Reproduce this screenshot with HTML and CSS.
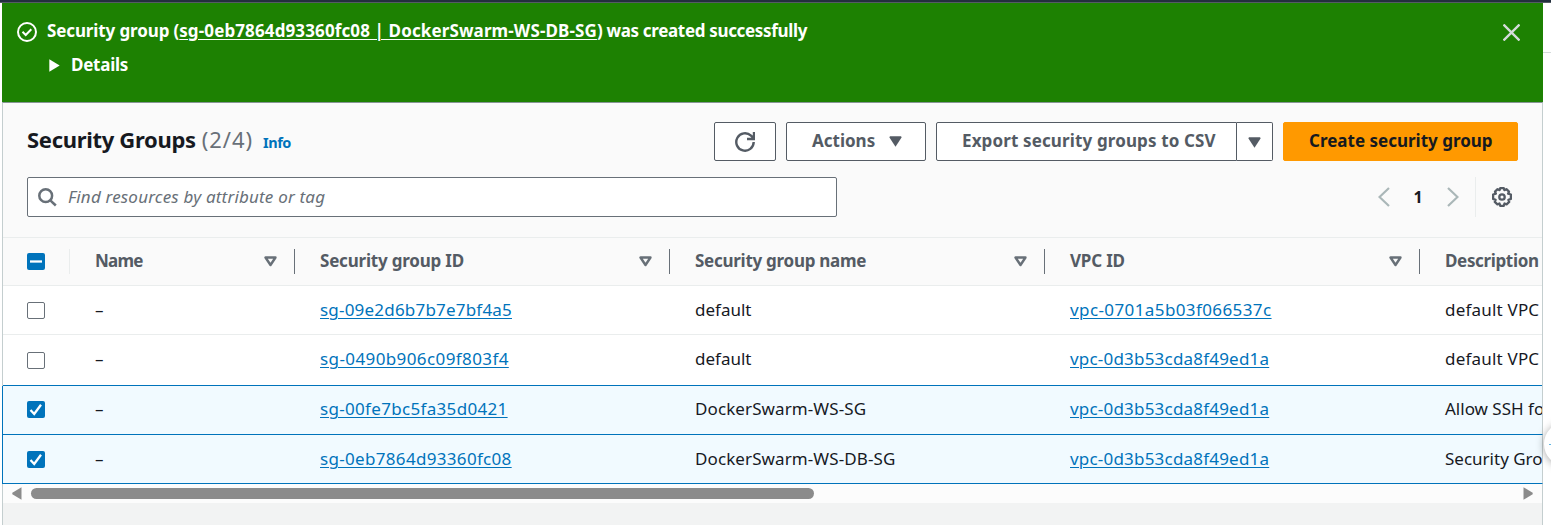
FILE: index.html
```html
<!DOCTYPE html>
<html lang="en">
<head>
<meta charset="utf-8">
<title>Security Groups</title>
<link rel="stylesheet" href="styles.css">
</head>
<body>
<div class="topbar"></div>
<div class="page">
  <main class="content">
    <section class="flash">
      <svg class="flash-icon" viewBox="0 0 20 20"><circle cx="10" cy="10" r="9"/><path d="M5.500 9.800l3.200 3.200 5.600-5.800"/></svg>
      <div class="flash-body">
        <div class="flash-text">Security group (<a class="flash-link">sg-0eb7864d93360fc08 | DockerSwarm-WS-DB-SG</a><span class="flash-end">) was created successfully</span></div>
        <div class="details"><svg class="details-arrow" viewBox="0 0 11 13"><path d="M.3.300v12.400L10.700 6.500z"/></svg><span class="details-text">Details</span></div>
      </div>
      <svg class="close" viewBox="0 0 16 16"><path d="M0.500 0.500l15 15M15.500 0.500l-15 15"/></svg>
    </section>
    <section class="panel">
      <header class="head">
        <h1 class="title">Security Groups</h1><span class="count">(2/4)</span><a class="info">Info</a>
        <div class="buttons">
          <button class="btn refresh"><svg width="20" height="20" viewBox="0 0 20 20"><path d="M18.700 10a8.700 8.700 0 1 1-2.700-6.300L18.500 6M19 0v7h-7"/></svg></button>
          <button class="btn actions"><span class="t-actions">Actions</span><svg width="13" height="11" viewBox="0 0 13 11"><path class="solid" d="M1 .3h11l.7 1L6.500 10.800.3 1.300z"/></svg></button>
          <div class="split"><button class="btn export"><span class="t-export">Export security groups to CSV</span></button><button class="btn drop"><svg width="13" height="11" viewBox="0 0 13 11"><path class="solid" d="M1 .3h11l.7 1L6.500 10.800.3 1.300z"/></svg></button></div>
          <button class="btn primary"><span class="t-create">Create security group</span></button>
        </div>
      </header>
      <div class="tools">
        <div class="search"><svg width="19" height="19" viewBox="0 0 19 19"><circle cx="7.700" cy="7.700" r="6.400"/><path d="M12.300 12.300l5.500 5.200"/></svg><span class="placeholder">Find resources by attribute or tag</span></div>
        <div class="pager">
          <svg class="chev" width="12" height="20" viewBox="0 0 12 20"><path d="M11 1L1.500 10l9.500 9"/></svg>
          <span class="num">1</span>
          <svg class="chev" width="12" height="20" viewBox="0 0 12 20"><path d="M1 1l9.500 9L1 19"/></svg>
          <div class="gearbox"><svg class="gear" width="20" height="20" viewBox="0 0 20 20"><path d="M8.300 1.100h3.400l.7 2 2-.9 2.600 2.500-.9 2 2.800.8v4.400l-2.500.9.8 2.100-2.600 2.500-2.100-.9-.8 2.400H8.300l-.8-2.400-2.100.9-2.600-2.500.8-2.100-2.500-.9V7.500l2.800-.8-.9-2L5.600 2.200l2 .9z"/><circle cx="10" cy="10" r="2.700"/></svg></div>
        </div>
      </div>
      <div class="table">
        <div class="row thead">
          <div class="cell pick"><span class="box on"><svg viewBox="0 0 18 17"><path d="M3 8.500h12"/></svg></span></div>
          <div class="cell"><span class="h-name">Name</span><svg class="sort" viewBox="0 0 13 11"><path d="M1.500 1.500h10L6.500 9z"/></svg></div>
          <div class="cell"><span class="h-id">Security group ID</span><svg class="sort" viewBox="0 0 13 11"><path d="M1.500 1.500h10L6.500 9z"/></svg></div>
          <div class="cell"><span class="h-group">Security group name</span><svg class="sort" viewBox="0 0 13 11"><path d="M1.500 1.500h10L6.500 9z"/></svg></div>
          <div class="cell"><span class="h-vpc">VPC ID</span><svg class="sort" viewBox="0 0 13 11"><path d="M1.500 1.500h10L6.500 9z"/></svg></div>
          <div class="cell"><span class="h-desc">Description</span></div>
        </div>
        <div class="row">
          <div class="cell pick"><span class="box"></span></div><div class="cell">–</div>
          <div class="cell"><a class="link">sg-09e2d6b7b7e7bf4a5</a></div><div class="cell"><span class="word">default</span></div>
          <div class="cell"><a class="link wide">vpc-0701a5b03f066537c</a></div><div class="cell"><span class="vpc-text">default VPC</span></div>
        </div>
        <div class="row second">
          <div class="cell pick"><span class="box"></span></div><div class="cell">–</div>
          <div class="cell"><a class="link wide">sg-0490b906c09f803f4</a></div><div class="cell"><span class="word">default</span></div>
          <div class="cell"><a class="link">vpc-0d3b53cda8f49ed1a</a></div><div class="cell"><span class="vpc-text">default VPC</span></div>
        </div>
        <div class="row selected third">
          <div class="cell pick"><span class="box on"><svg viewBox="0 0 18 17"><path d="M3.500 9l3.700 4L14 3.700"/></svg></span></div><div class="cell">–</div>
          <div class="cell"><a class="link mid">sg-00fe7bc5fa35d0421</a></div><div class="cell"><span class="docker">DockerSwarm-WS-SG</span></div>
          <div class="cell"><a class="link">vpc-0d3b53cda8f49ed1a</a></div><div class="cell"><span class="word">Allow SSH fo</span></div>
        </div>
        <div class="row selected">
          <div class="cell pick"><span class="box on"><svg viewBox="0 0 18 17"><path d="M3.500 9l3.700 4L14 3.700"/></svg></span></div><div class="cell">–</div>
          <div class="cell"><a class="link mid">sg-0eb7864d93360fc08</a></div><div class="cell"><span class="docker">DockerSwarm-WS-DB-SG</span></div>
          <div class="cell"><a class="link">vpc-0d3b53cda8f49ed1a</a></div><div class="cell"><span class="word">Security Gro</span></div>
        </div>
      </div>
      <div class="scroll">
        <svg width="10" height="13" viewBox="0 0 10 13"><path d="M9.500 .3v12.400L.3 7.300v-1.600z"/></svg>
        <div class="track"><div class="thumb"></div></div>
        <svg width="10" height="13" viewBox="0 0 10 13"><path d="M.5 .3v12.400l9.200-5.400v-1.600z"/></svg>
      </div>
    </section>
  </main>
  <aside class="side"><div class="side-head"></div></aside>
</div>
<div class="bubble"><span class="bubble-mark"></span></div>
</body>
</html>
```
FILE: styles.css
```css
* { box-sizing: border-box; }
body { position: relative; margin: 0; width: 1551px; height: 525px; overflow: hidden; background: #fff; color: #16191f; font-family: "Noto Sans", sans-serif; font-size: 17px; line-height: 24px; }
svg { display: block; flex: none; fill: none; }
.topbar { height: 3px; background: #232f3e; border-bottom: 1px solid #545b64; }
.page { display: flex; height: 522px; padding-left: 2px; }
.content { width: 1541px; display: flex; flex-direction: column; background: #f2f3f3; }
.flash { height: 99px; padding: 16px 23px 0 15px; display: flex; background: #1d8102; color: #fff; font-weight: 700; }
.flash-icon { width: 20px; height: 20px; margin-top: 3px; stroke: #fff; stroke-width: 2; }
.flash-body { margin-left: 10px; flex: 1; }
.flash-text { white-space: nowrap; letter-spacing: -.12px; }
.flash-link { letter-spacing: .12px; text-decoration: underline; text-underline-offset: 2px; text-decoration-thickness: 1px; }
.flash-end { letter-spacing: -.33px; }
.details { display: flex; align-items: center; margin-top: 10px; padding-left: 2px; }
.details-arrow { width: 11px; height: 13px; fill: #fff; margin-right: 11px; }
.details-text { letter-spacing: -.25px; }
.close { width: 17px; height: 17px; margin-top: 5px; stroke: #d5dbdb; stroke-width: 2.200; }
.panel { flex: 1; border-left: 1px solid #c4cecf; border-right: 1px solid #c4cecf; border-top: 1px solid #879596; }
.head { height: 74px; padding: 19px 24px 0 24px; display: flex; background: #fafafa; }
.title { margin: 4px 0 0; font-size: 22px; line-height: 26px; font-weight: 700; white-space: nowrap; letter-spacing: -.31px; }
.count { margin: 4px 0 0 6px; font-size: 22px; line-height: 26px; color: #687078; white-space: nowrap; letter-spacing: .9px; }
.info { margin: 8px 0 0 10px; font-size: 14.500px; font-weight: 700; line-height: 24px; color: #0073bb; letter-spacing: -.4px; }
.buttons { margin-left: auto; display: flex; gap: 10px; height: 39px; }
.btn { display: flex; align-items: center; justify-content: center; height: 39px; padding: 0 0 1px; border: 1px solid #545b64; border-radius: 2px; background: #fff; color: #545b64; font: 700 17px/24px "Noto Sans", sans-serif; white-space: nowrap; }
.solid { fill: #545b64; }
.refresh { width: 62px; }
.refresh svg { stroke: #545b64; stroke-width: 2.400; margin-top: 1px; }
.actions { width: 140px; padding: 0 23px 2px 25px; justify-content: space-between; }
.actions svg, .drop svg { margin-top: 2px; }
.split { display: flex; }
.export { width: 301px; padding: 0 0 2px 25px; justify-content: flex-start; border-radius: 2px 0 0 2px; }
.t-export { letter-spacing: .13px; }
.drop { width: 36px; padding-right: 1px; border-left: 0; border-radius: 0 2px 2px 0; }
.primary { width: 235px; padding: 0 0 2px 25px; justify-content: flex-start; background: #f90; border-color: #f90; color: #16191f; }
.tools { height: 61px; padding: 0 30px 0 24px; display: flex; align-items: flex-start; justify-content: space-between; background: #fafafa; border-bottom: 1px solid #eaeded; }
.search { width: 810px; height: 40px; padding-left: 10px; display: flex; align-items: center; gap: 11px; background: #fff; border: 1px solid #687078; border-radius: 2px; color: #687078; }
.search svg { stroke: #687078; stroke-width: 2.500; }
.placeholder { font-style: italic; white-space: nowrap; letter-spacing: .19px; }
.pager { display: flex; align-items: center; height: 40px; }
.chev { stroke: #aab7b8; stroke-width: 2.200; }
.num { width: 57px; padding: 0 0 1px; text-align: center; font-size: 16px; font-weight: 700; }
.gearbox { height: 40px; margin-left: 16.500px; padding-left: 16px; border-left: 1px solid #eaeded; display: flex; align-items: center; }
.gear { stroke: #545b64; stroke-width: 2.300; stroke-linejoin: round; }
.row { display: grid; grid-template-columns: 67px 225px 375px 375px 375px 122px; height: 49px; border-bottom: 1px solid #eaeded; background: #fff; }
.cell { display: flex; align-items: center; padding-left: 25px; white-space: nowrap; overflow: hidden; }
.pick { padding-left: 24px; }
.thead { height: 48px; background: #fafafa; color: #545b64; font-weight: 700; }
.thead .cell { height: 25px; margin-top: 11px; padding-right: 17.500px; justify-content: space-between; border-right: 1px solid #687078; }
.thead .pick { border-color: #eaeded; }
.thead .cell:last-child { border: 0; padding-right: 0; }
.thead span { margin-top: -1px; }
.thead .box { margin-top: 0; }
.h-name { letter-spacing: -.8px; }
.h-id { letter-spacing: -.2px; }
.h-group { letter-spacing: -.27px; }
.h-vpc { letter-spacing: -.2px; }
.h-desc { letter-spacing: -.35px; }
.sort { width: 13px; height: 11px; stroke: #687078; stroke-width: 2.400; stroke-linejoin: round; }
.second { height: 51px; border-color: #0073bb; }
.second .cell, .third .cell { padding-bottom: 2px; }
.second .pick { padding-bottom: 0; }
.third .pick { padding-bottom: 1px; }
.selected { margin: 0 -1px; border: 1px solid #0073bb; border-top: 0; border-right-color: #c4cecf; background: #f1faff; }
.link { color: #0073bb; text-decoration: underline; text-underline-offset: 2px; text-decoration-thickness: 1px; letter-spacing: .2px; }
.mid { letter-spacing: .32px; }
.wide { letter-spacing: .4px; }
.docker { letter-spacing: .1px; }
.vpc-text { letter-spacing: .2px; }
.box { display: block; width: 18px; height: 17px; border: 1px solid #687078; border-radius: 2px; background: #fff; }
.on { background: #0073bb; border: 0; }
.on svg { width: 18px; height: 17px; stroke: #fff; stroke-width: 2.300; }
.scroll { height: 19px; padding: 0 9px; display: flex; align-items: center; background: #fcfcfc; }
.scroll svg { fill: #8b8b8b; }
.track { flex: 1; padding-left: 9px; }
.thumb { width: 783px; height: 11px; border-radius: 6px; background: #8b8b8b; }
.side { width: 8px; background: #fff; }
.side-head { height: 50px; border-bottom: 1px solid #d5dbdb; }
.bubble { position: absolute; left: 1544px; top: 422px; width: 44px; height: 44px; border-radius: 50%; background: #fff; box-shadow: 0 1px 9px rgba(0,0,0,.35); }
.bubble-mark { position: absolute; left: 5px; top: 22px; width: 2px; height: 1px; background: #5eb6e4; }
```
